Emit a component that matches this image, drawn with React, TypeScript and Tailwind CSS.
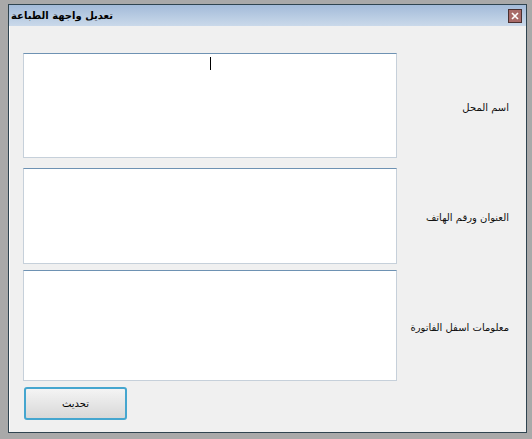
import React from "react";

type FieldRowProps = {
  label: string;
  height: string;
  caret?: boolean;
};

const FieldRow: React.FC<FieldRowProps> = ({ label, height, caret }) => {
  return (
    <div className="flex items-center">
      <div
        className={`relative w-[374px] ${height} bg-white border border-[#c6d0da] border-t-[#6e92b3]`}
      >
        {caret && <span className="absolute left-[186px] top-[3px] h-[13px] w-px bg-black" />}
      </div>
      <div dir="rtl" className="flex-1 pr-[17px] pt-[3px] text-right text-[10px] text-[#111]">
        {label}
      </div>
    </div>
  );
};

export default function App() {
  return (
    <div
      className="w-[532px] h-[439px] bg-[#a9a9a9] pt-[4px] pl-[8px] pr-[5px] pb-[6px]"
      style={{ fontFamily: '"DejaVu Sans", "Noto Sans", sans-serif' }}
    >
      <div className="flex h-full flex-col border border-[#2f4450] bg-[#f0f0f0]">
        {/* title bar */}
        <div className="flex h-[21px] items-center justify-between bg-gradient-to-b from-[#a3bbd9] to-[#cad9ea] pl-[2px] pr-[4px]">
          <span dir="rtl" className="text-[10px] font-bold text-black">
            تعديل واجهة الطباعة
          </span>
          <div className="flex h-[14px] w-[14px] items-center justify-center border border-[#4a3030] bg-[#a86a68]">
            <svg width="8" height="8" viewBox="0 0 8 8">
              <path d="M1 1 L7 7 M7 1 L1 7" stroke="white" strokeWidth="1.6" />
            </svg>
          </div>
        </div>

        {/* content */}
        <div className="flex flex-1 flex-col border-l border-white pl-[13px] pt-[27px]">
          <FieldRow label="اسم المحل" height="h-[105px]" caret />
          <div className="h-[10px]" />
          <FieldRow label="العنوان ورقم الهاتف" height="h-[96px]" />
          <div className="h-[6px]" />
          <FieldRow label="معلومات اسفل الفاتورة" height="h-[111px]" />
          <div className="h-[6px]" />
          <button
            type="button"
            className="ml-px h-[33px] w-[103px] rounded-[3px] border-2 border-[#45a6cf] bg-gradient-to-b from-[#f4f4f4] to-[#d8d8d8] text-[10px] text-black"
          >
            <span dir="rtl">تحديث</span>
          </button>
        </div>
      </div>
    </div>
  );
}
